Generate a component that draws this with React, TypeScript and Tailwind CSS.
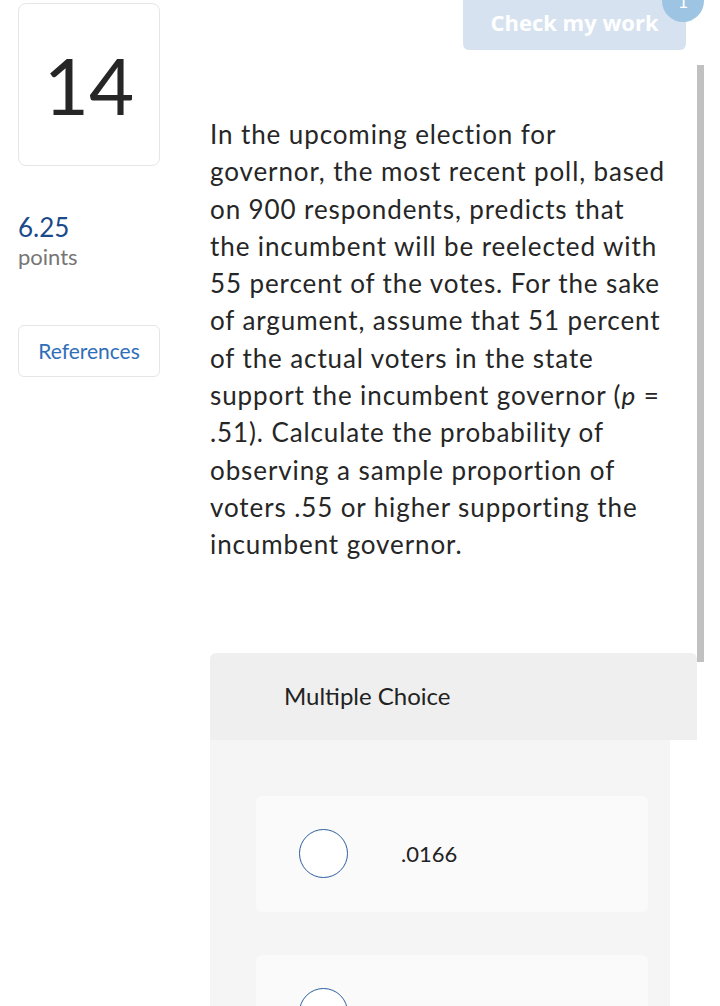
const font = { fontFamily: "Lato, 'Open Sans', sans-serif" };

const lines = [
  "In the upcoming election for",
  "governor, the most recent poll, based",
  "on 900 respondents, predicts that",
  "the incumbent will be reelected with",
  "55 percent of the votes. For the sake",
  "of argument, assume that 51 percent",
  "of the actual voters in the state",
  "support the incumbent governor (",
  ".51). Calculate the probability of",
  "observing a sample proportion of",
  "voters .55 or higher supporting the",
  "incumbent governor.",
];

const Option = ({ label }: { label: string }) => (
  <div className="h-[116px] shrink-0 rounded-[6px] bg-[#fafafa] flex items-center pl-[43px]">
    <div className="w-[49px] h-[49px] rounded-full border border-[#2c5f9e] bg-white shrink-0" />
    <span className="ml-[53px] text-[22px] text-[#222]">{label}</span>
  </div>
);

export default function App() {
  return (
    <div className="relative w-[720px] h-[1006px] overflow-hidden bg-white" style={font}>
      <div className="flex">
        {/* left column */}
        <div className="w-[142px] ml-[18px] shrink-0 flex flex-col">
          <div className="mt-[3px] h-[163px] rounded-[8px] border border-[#e6e6e6] flex items-center justify-center">
            <span className="text-[78px] leading-none text-[#262626]">14</span>
          </div>
          <div className="mt-[46px] text-[26px] leading-[30px] text-[#1b4a8a]">6.25</div>
          <div className="text-[22px] leading-[30px] text-[#767676]">points</div>
          <div className="mt-[53px] h-[52px] rounded-[6px] border border-[#e6e6e6] flex items-center justify-center text-[21px] text-[#2f6eb8]">
            References
          </div>
        </div>

        {/* right column */}
        <div className="ml-[50px] flex-1 flex flex-col">
          <div className="flex justify-end pr-[34px]">
            <div className="relative -mt-[6px] w-[223px] h-[56px] rounded-[6px] bg-[#d6e2f0] flex items-end justify-center pb-[11px]">
              <span className="text-[22px] font-bold text-white" style={{ fontFamily: "'Open Sans', sans-serif" }}>
                Check my work
              </span>
              <div className="absolute -right-[18px] -top-[14px] w-[42px] h-[42px] rounded-full bg-[#9dc4e2] flex items-center justify-center text-white text-[18px]">
                1
              </div>
            </div>
          </div>
          <div className="mt-[66px] text-[26px] tracking-[0.9px] leading-[37.3px] text-[#262626] whitespace-nowrap">
            {lines.map((l, i) => (
              <div key={i}>
                {l}
                {i === 7 && (
                  <>
                    <i>p</i> =
                  </>
                )}
              </div>
            ))}
          </div>

          <div className="mt-[89px] w-[487px] h-[87px] shrink-0 rounded-t-[6px] bg-[#efefef] flex items-center pl-[74px]">
            <span className="text-[24px] text-[#222]">Multiple Choice</span>
          </div>
          <div className="w-[460px] bg-[#f5f5f5] pl-[46px] pr-[22px] pt-[56px] pb-[40px] flex flex-col gap-[43px]">
            <Option label=".0166" />
            <Option label="" />
          </div>
        </div>
      </div>

      {/* scrollbar */}
      <div className="absolute left-[697px] top-[65px] w-[7px] h-[597px] bg-[#c1c1c1]" />
    </div>
  );
}
